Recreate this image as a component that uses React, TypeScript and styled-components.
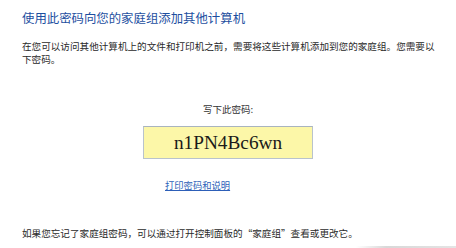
import styled, { createGlobalStyle } from 'styled-components';

const GlobalStyle = createGlobalStyle`
  html, body {
    margin: 0;
    padding: 0;
    background: #ffffff;
  }
  body {
    font-family: 'Noto Sans CJK SC', 'Noto Sans', sans-serif;
    color: #222;
  }
`;

const Page = styled.div`
  width: 456px;
  height: 248px;
  box-sizing: border-box;
  padding: 10px 22px 0;
  display: flex;
  flex-direction: column;
  position: relative;
  overflow: hidden;
`;

const Title = styled.h1`
  margin: 0;
  font-size: 12.4px;
  line-height: 16px;
  font-weight: 400;
  color: #1d4f9f;
`;

const Text = styled.p<{ $mt: number }>`
  margin: ${(p) => p.$mt}px 0 0;
  font-size: 9.6px;
  line-height: 13px;
  color: #2a2a2a;
  width: 418px;
`;

const CodeSection = styled.div`
  display: flex;
  flex-direction: column;
  align-items: center;
  margin-top: 37px;
`;

const CodeLabel = styled.div`
  font-size: 9.5px;
  line-height: 13px;
  color: #333;
`;

const CodeBox = styled.div`
  margin-top: 10px;
  width: 170px;
  height: 33px;
  box-sizing: border-box;
  background: #fcf7a8;
  border: 1px solid #b9c3cc;
  border-top-color: #a9b4bf;
  display: flex;
  align-items: center;
  justify-content: center;
  font-family: 'Liberation Serif', 'Times New Roman', serif;
  font-size: 19.3px;
  color: #1a1a1a;
`;

const LinkRow = styled.div`
  margin-top: 20px;
  padding-left: 143px;
  display: flex;
  font-size: 9.3px;
  line-height: 13px;
`;

const PrintLink = styled.a`
  color: #2d5fb8;
  text-decoration: underline;
  text-underline-offset: 1px;
  cursor: pointer;
`;

const Shade = styled.div`
  position: absolute;
  right: 0;
  bottom: 0;
  width: 100px;
  height: 2px;
  background: linear-gradient(to right, rgba(200, 200, 200, 0), #d8d8d8 30%, #e4e4e4);
`;

export default function App() {
  return (
    <>
      <GlobalStyle />
      <Page>
        <Title>使用此密码向您的家庭组添加其他计算机</Title>
        <Text $mt={14}>
          在您可以访问其他计算机上的文件和打印机之前，需要将这些计算机添加到您的家庭组。您需要以下密码。
        </Text>
        <CodeSection>
          <CodeLabel>写下此密码:</CodeLabel>
          <CodeBox>n1PN4Bc6wn</CodeBox>
        </CodeSection>
        <LinkRow>
          <PrintLink>打印密码和说明</PrintLink>
        </LinkRow>
        <Text $mt={35}>
          如果您忘记了家庭组密码，可以通过打开控制面板的“家庭组”查看或更改它。
        </Text>
        <Shade />
      </Page>
    </>
  );
}
